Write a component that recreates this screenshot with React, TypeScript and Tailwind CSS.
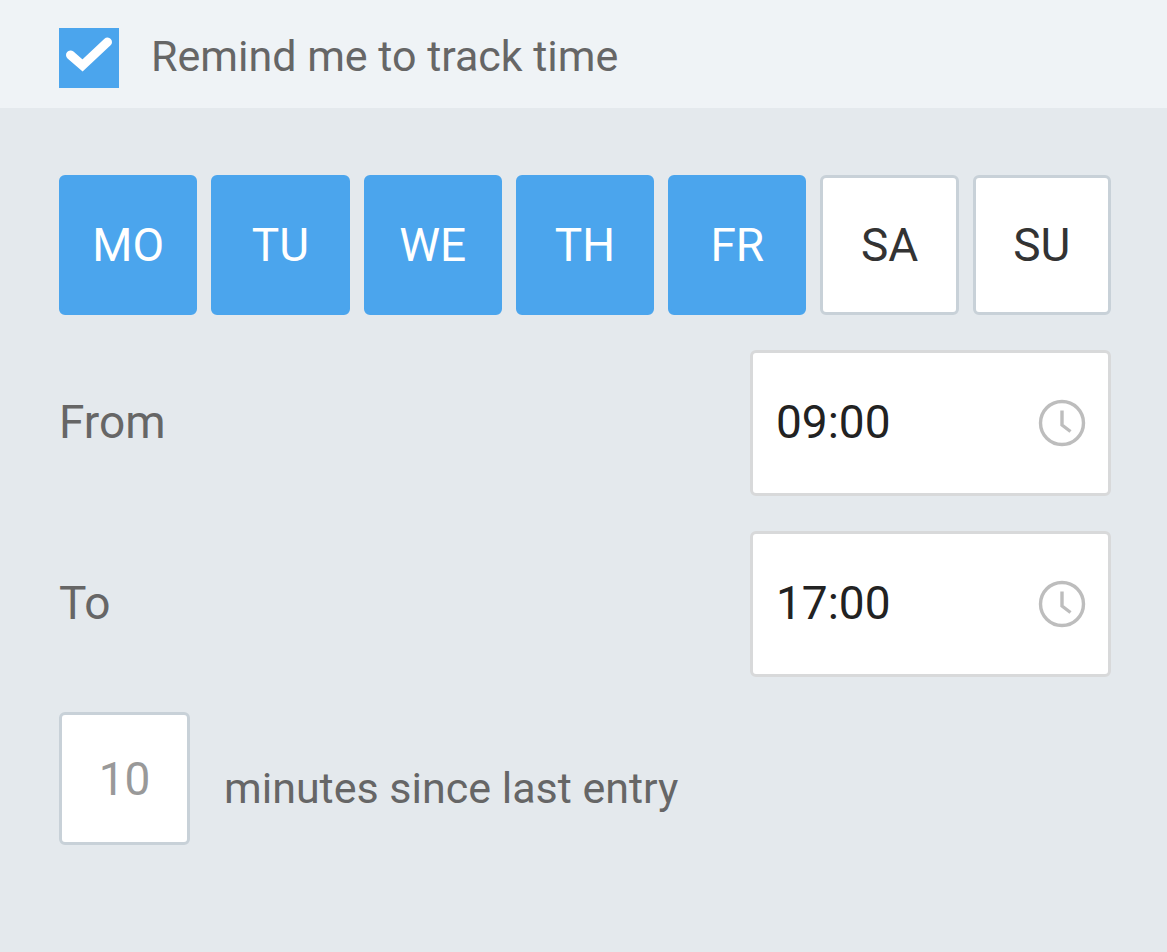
import { useState } from 'react';
import { clsx } from 'clsx';

const days = ['MO', 'TU', 'WE', 'TH', 'FR', 'SA', 'SU'];

interface TimeFieldProps {
    id: string;
    label: string;
    value: string;
    onChange: (value: string) => void;
}

function ClockIcon() {
    return (
        <svg
            viewBox="0 0 48 48"
            className="pointer-events-none absolute right-[25px] h-12 w-12"
            fill="none"
            stroke="#bdbdbd"
            strokeWidth="3.4"
            aria-hidden="true"
        >
            <circle cx="24" cy="24" r="21.5" />
            <path d="M24 11.5V26L32.5 32.5" />
        </svg>
    );
}

function TimeField({ id, label, value, onChange }: TimeFieldProps) {
    return (
        <div className="flex items-center justify-between">
            <label htmlFor={id} className="pb-0.5 text-[46px] leading-[56px] text-[#666666]">
                {label}
            </label>
            <div className="relative flex items-center">
                <input
                    id={id}
                    type="text"
                    value={value}
                    onChange={(e) => onChange(e.target.value)}
                    className="h-[146px] w-[361px] rounded-md border-3 border-[#d8d9da] bg-white pr-20 pb-0.5 pl-[23px] text-[46px] leading-[56px] text-[#222222]"
                />
                <ClockIcon />
            </div>
        </div>
    );
}

export default function App() {
    const [enabled, setEnabled] = useState(true);
    const [selected, setSelected] = useState(['MO', 'TU', 'WE', 'TH', 'FR']);
    const [from, setFrom] = useState('09:00');
    const [to, setTo] = useState('17:00');
    const [minutes, setMinutes] = useState('10');

    const toggleDay = (day: string) => {
        setSelected((prev) =>
            prev.includes(day) ? prev.filter((d) => d !== day) : [...prev, day]
        );
    };

    return (
        <div className="flex min-h-screen flex-col bg-[#e4e9ed] font-[Roboto,sans-serif]">
            {/* Reminder toggle */}
            <header className="flex items-center gap-8 bg-[#eff3f6] pt-7 pr-14 pb-5 pl-[59px]">
                <div className="relative h-[60px] w-[60px] shrink-0">
                    <input
                        id="remind"
                        type="checkbox"
                        checked={enabled}
                        onChange={(e) => setEnabled(e.target.checked)}
                        className="block h-full w-full appearance-none bg-white checked:bg-[#4ba5ed]"
                    />
                    {enabled && (
                        <svg
                            viewBox="0 0 60 60"
                            className="pointer-events-none absolute inset-0 h-full w-full"
                            fill="none"
                            stroke="white"
                            strokeWidth="9"
                            strokeLinecap="round"
                            aria-hidden="true"
                        >
                            <path d="M11.5 27L23.5 37.5L48.5 14" />
                        </svg>
                    )}
                </div>
                <label htmlFor="remind" className="pb-1 text-[43px] leading-[56px] text-[#666666]">
                    Remind me to track time
                </label>
            </header>

            <main className="flex flex-col gap-[35px] pt-[67px] pr-14 pb-14 pl-[59px]">
                {/* Days */}
                <div className="grid grid-cols-7 gap-[14px]">
                    {days.map((day) => {
                        const active = selected.includes(day);
                        return (
                            <button
                                key={day}
                                type="button"
                                aria-pressed={active}
                                onClick={() => toggleDay(day)}
                                className={clsx(
                                    'h-[140px] rounded-md border-3 text-[46px] leading-[56px]',
                                    active
                                        ? 'border-[#4ba5ed] bg-[#4ba5ed] text-white'
                                        : 'border-[#c8d1d8] bg-white text-[#333333]'
                                )}
                            >
                                {day}
                            </button>
                        );
                    })}
                </div>

                <TimeField id="from" label="From" value={from} onChange={setFrom} />
                <TimeField id="to" label="To" value={to} onChange={setTo} />

                {/* Interval */}
                <div className="flex items-center gap-[34px]">
                    <input
                        id="minutes"
                        type="text"
                        value={minutes}
                        onChange={(e) => setMinutes(e.target.value)}
                        className="h-[133px] w-[131px] rounded-md border-3 border-[#c8d1d8] bg-white text-center text-[46px] leading-[56px] text-[#999999]"
                    />
                    <label htmlFor="minutes" className="pt-[18px] text-[43px] leading-[56px] text-[#666666]">
                        minutes since last entry
                    </label>
                </div>
            </main>
        </div>
    );
}
